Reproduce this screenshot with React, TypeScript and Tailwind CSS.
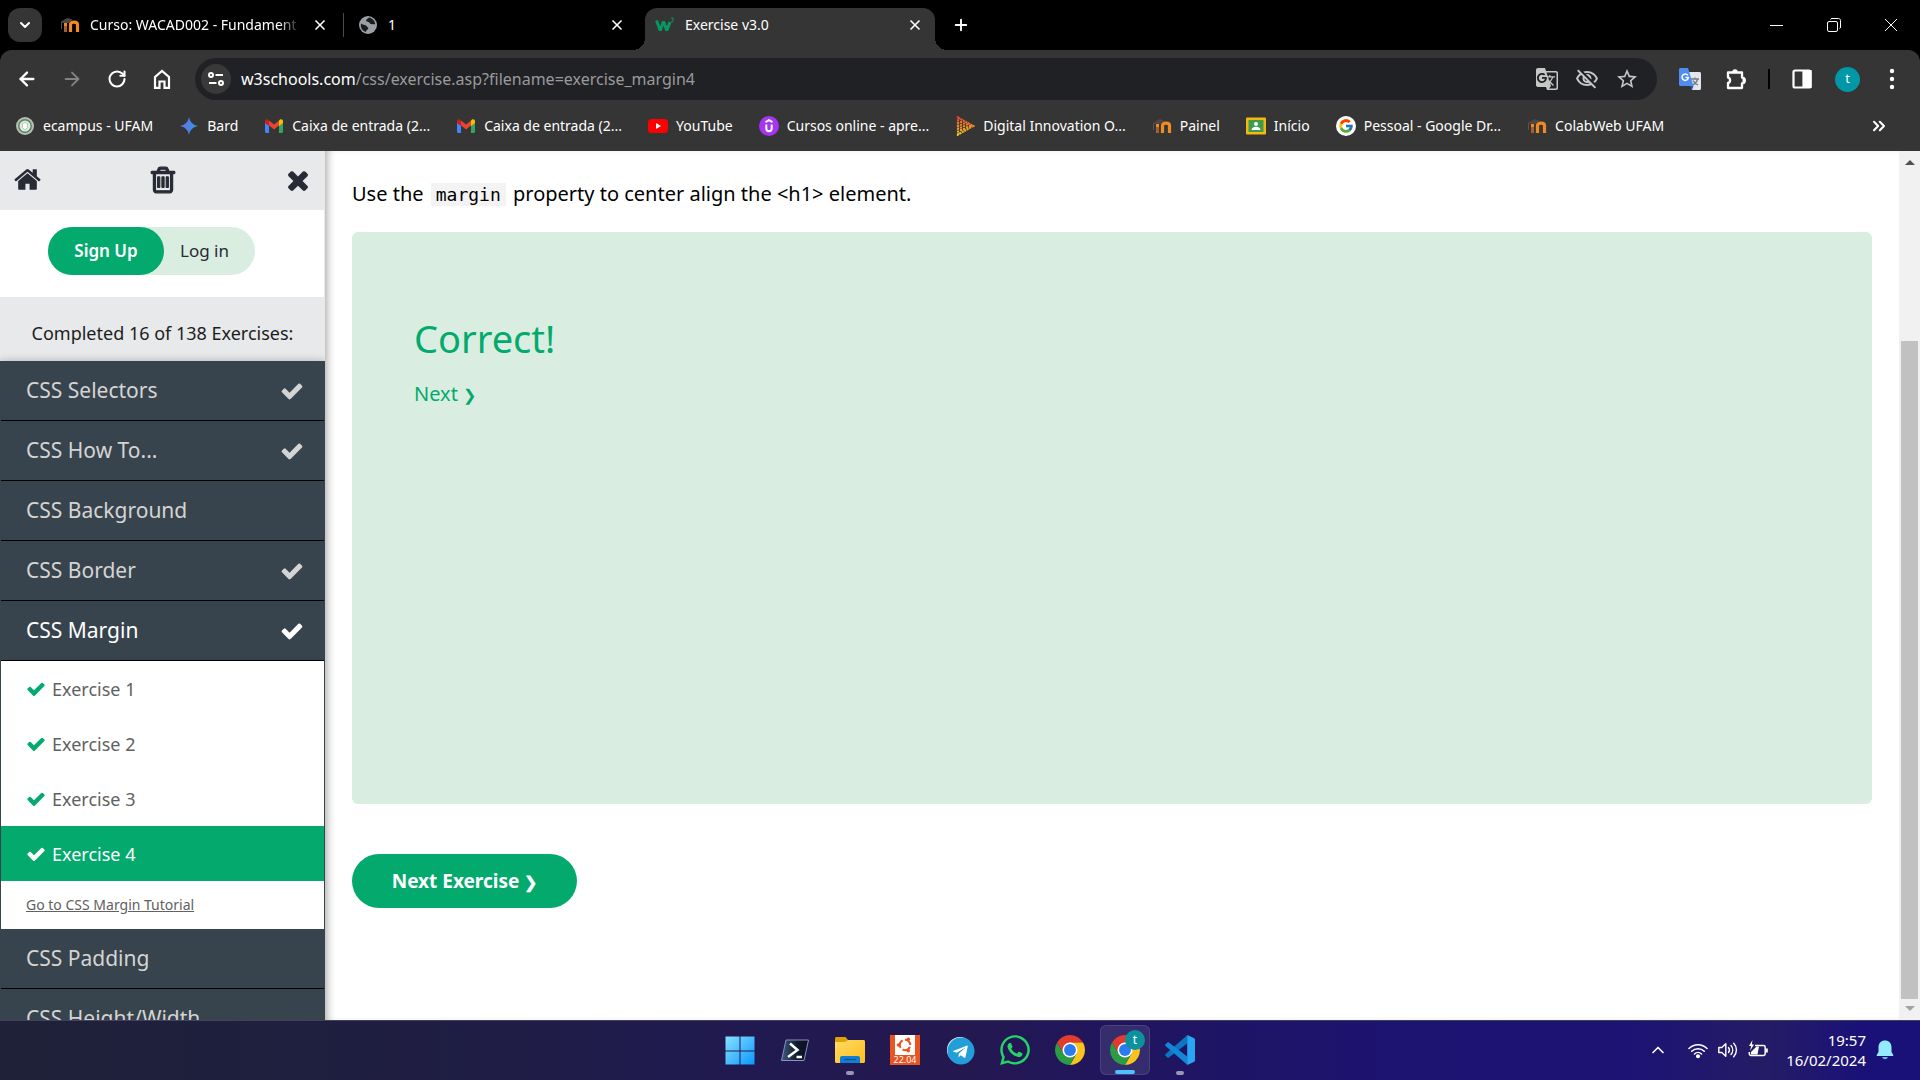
import React from "react";
import { ArrowLeft, ArrowRight, RotateCw, ChevronDown, ChevronUp, ChevronsRight, Plus, X } from "lucide-react";
import { MdGTranslate, MdOutlineVisibilityOff, MdStarBorder } from "react-icons/md";
import { FcGoogle } from "react-icons/fc";
import { FaTelegram, FaWhatsapp } from "react-icons/fa";

const PATHS = {
  check:
    "M1671 566q0 40-28 68l-724 724-136 136q-28 28-68 28t-68-28l-136-136-362-362q-28-28-28-68t28-68l136-136q28-28 68-28t68 28l294 295 656-657q28-28 68-28t68 28l136 136q28 28 28 68z",
  home:
    "M1472 992v480q0 26-19 45t-45 19h-384v-384h-256v384h-384q-26 0-45-19t-19-45v-480q0-1 .5-3t.5-3l575-474 575 474q1 2 1 6zm223-69l-62 74q-8 9-21 11h-3q-13 0-21-7l-692-577-692 577q-12 8-24 7-13-2-21-11l-62-74q-8-10-7-23.5t11-21.5l719-599q32-26 76-26t76 26l244 204v-195q0-14 9-23t23-9h192q14 0 23 9t9 23v408l219 182q10 8 11 21.5t-7 23.5z",
  times:
    "M1490 1322q0 40-28 68l-136 136q-28 28-68 28t-68-28l-294-294-294 294q-28 28-68 28t-68-28l-136-136q-28-28-28-68t28-68l294-294-294-294q-28-28-28-68t28-68l136-136q28-28 68-28t68 28l294 294 294-294q28-28 68-28t68 28l136 136q28 28 28 68t-28 68l-294 294 294 294q28 28 28 68z",
  trash:
    "M704 736v576q0 14-9 23t-23 9h-64q-14 0-23-9t-9-23v-576q0-14 9-23t23-9h64q14 0 23 9t9 23zm256 0v576q0 14-9 23t-23 9h-64q-14 0-23-9t-9-23v-576q0-14 9-23t23-9h64q14 0 23 9t9 23zm256 0v576q0 14-9 23t-23 9h-64q-14 0-23-9t-9-23v-576q0-14 9-23t23-9h64q14 0 23 9t9 23zm128 724v-948h-896v948q0 22 7 40.5t14.5 27 10.5 8.5h832q3 0 10.5-8.5t14.5-27 7-40.5zm-672-1076h448l-48-117q-7-9-17-11h-317q-10 2-17 11zm928 32v64q0 14-9 23t-23 9h-96v948q0 83-47 143.5t-113 60.5h-832q-66 0-113-58.5t-47-141.5v-952h-96q-14 0-23-9t-9-23v-64q0-14 9-23t23-9h309l70-167q15-37 54-63t79-26h320q40 0 79 26t54 63l70 167h309q14 0 23 9t9 23z",
};

function Glyph({ name, className }: { name: keyof typeof PATHS; className: string }) {
  return (
    <svg viewBox="0 0 1792 1792" className={className} fill="currentColor" aria-hidden="true">
      <path d={PATHS[name]} />
    </svg>
  );
}

function Moodle() {
  return (
    <svg viewBox="0 0 20 20" className="size-5" fill="none" aria-hidden="true">
      <path d="M5.500 17v-6" stroke="#a85f2a" strokeWidth="3" />
      <path d="M10.500 17V9.500c0-3.200 7-3.200 7 0V17" stroke="#f08a24" strokeWidth="3.200" />
      <path d="M5.500 8v3" stroke="#f08a24" strokeWidth="3" />
      <path d="M1 6.500L7.500 3l5 1.500L9 8 3 8z" fill="#4d4642" />
      <path d="M1.500 7v7" stroke="#5a5350" strokeWidth="1" />
    </svg>
  );
}

function Gmail() {
  return (
    <svg viewBox="0 0 20 20" className="size-5" aria-hidden="true">
      <path d="M1 5v10.500c0 .8.600 1.500 1.400 1.500H5V8z" fill="#4285f4" />
      <path d="M15 8v9h2.600c.8 0 1.400-.7 1.400-1.500V5z" fill="#34a853" />
      <path d="M5 4.500v5l5 4 5-4v-5l-5 4z" fill="#ea4335" />
      <path d="M1 5v2l4 3V4.500L4 3.500C2.800 2.600 1 3.500 1 5z" fill="#c5221f" />
      <path d="M19 5v2l-4 3V4.500l1-1c1.200-.9 3 0 3 1.500z" fill="#fbbc04" />
    </svg>
  );
}

function Ecampus() {
  return (
    <svg viewBox="0 0 20 20" className="size-5" aria-hidden="true">
      <circle cx="10" cy="10" r="9" fill="#b9bdb5" />
      <circle cx="10" cy="10" r="6.200" fill="#dfe8dc" stroke="#4f8462" strokeWidth="1.400" />
      <path d="M7.500 7.500l2.500-1 2.500 1v4L10 14l-2.500-2.500z" fill="#fff" stroke="#8fae93" strokeWidth=".6" />
    </svg>
  );
}

function Spark() {
  return (
    <svg viewBox="0 0 20 20" className="size-5" aria-hidden="true">
      <defs>
        <linearGradient id="spark" x1="0" y1="0" x2="1" y2="0">
          <stop offset="0" stopColor="#7b6fd0" />
          <stop offset=".45" stopColor="#4a82ea" />
          <stop offset="1" stopColor="#3f9ad0" />
        </linearGradient>
      </defs>
      <path d="M10 1c.9 5 4 8.100 9 9-5 .9-8.100 4-9 9-.9-5-4-8.100-9-9 5-.9 8.100-4 9-9z" fill="url(#spark)" />
    </svg>
  );
}

function YouTube() {
  return (
    <svg viewBox="0 0 20 20" className="size-5" aria-hidden="true">
      <rect x="0" y="3" width="20" height="14" rx="3.500" fill="#f00" />
      <path d="M8 7l5 3-5 3z" fill="#fff" />
    </svg>
  );
}

function Udemy() {
  return (
    <svg viewBox="0 0 20 20" className="size-5" aria-hidden="true">
      <circle cx="10" cy="10" r="10" fill="#a435f0" />
      <path d="M6.500 6.200L10 4.200l3.500 2M7.300 8.500v4c0 3.600 5.400 3.600 5.400 0v-4" fill="none" stroke="#fff" strokeWidth="2" />
    </svg>
  );
}

function Dio() {
  return (
    <svg viewBox="0 0 20 20" className="size-5" fill="none" aria-hidden="true">
      <defs>
        <linearGradient id="dio" x1="0" y1="0" x2="0" y2="20" gradientUnits="userSpaceOnUse">
          <stop offset="0" stopColor="#e6392d" />
          <stop offset=".5" stopColor="#f08a24" />
          <stop offset="1" stopColor="#f2d024" />
        </linearGradient>
      </defs>
      <path d="M3 1.500L18 10 3 18.500z" stroke="url(#dio)" strokeWidth="2.200" strokeDasharray="2.200 .6" />
      <path d="M6 5v10M9 6.500v7.500M12 7.500v5M15 9v2" stroke="url(#dio)" strokeWidth="2.200" strokeDasharray="2 .7" />
    </svg>
  );
}

function Classroom() {
  return (
    <svg viewBox="0 0 20 20" className="size-5" aria-hidden="true">
      <rect x="0" y="1.500" width="20" height="17" rx="1" fill="#f4b90b" />
      <rect x="2.500" y="4" width="15" height="12" fill="#3f9b4f" />
      <circle cx="10" cy="8" r="2" fill="#fff" />
      <path d="M5.500 14c0-4.500 9-4.500 9 0z" fill="#fff" />
    </svg>
  );
}

function GoogleBadge() {
  return (
    <span className="grid size-5 place-items-center rounded-full bg-white">
      <FcGoogle className="size-4" />
    </span>
  );
}

function W3() {
  return (
    <svg viewBox="0 0 20 20" className="size-5" fill="none" stroke="#059862" aria-hidden="true">
      <path d="M1.500 5.500l3.700 10 3.300-9 3.300 9 3.200-8.500" strokeWidth="3" strokeLinejoin="bevel" />
      <path d="M16 3h2.500l-1.300 1.800c2 .2 1.500 2.700-1.200 2" strokeWidth="1" />
    </svg>
  );
}

function Globe() {
  return (
    <svg viewBox="0 0 20 20" className="size-5" aria-hidden="true">
      <circle cx="10" cy="10" r="9" fill="#9aa0a6" />
      <path d="M3 8.500c2 1.800 4.500 1 5.500 2.500s2.500 1.500 1.500 3-2 1-2 3c-3-.8-6-4-5-8.500zM11 2.500c-1.500 1.700-3 1.500-2.800 3 .2 1.800 3 1 3.500 2.500s2.800 1.200 5.500 1.200c-.1-3-2.500-6-6.200-6.700z" fill="#1b1c1e" />
    </svg>
  );
}

function Translate() {
  return (
    <svg viewBox="0 0 22 24" className="h-6 w-[22px]" aria-hidden="true">
      <path d="M8 5h12.500c.8 0 1.500.7 1.500 1.500v15c0 .8-.7 1.500-1.500 1.500H13z" fill="#e3e5e8" />
      <path d="M12 12h8M16 10.500V12M18.500 12c-.6 3-3 5-5 6M14 13.500c1 2 3 3.700 5 4.500" stroke="#6f7a86" strokeWidth="1.300" fill="none" />
      <path d="M1.500 1H9l5.500 18H1.500C.7 19 0 18.300 0 17.500v-15C0 1.700.7 1 1.500 1z" fill="#4f8df5" />
      <path d="M11 19h3.500L13 23z" fill="#1d56c9" />
      <path d="M8.800 8.300A3.200 3.200 0 1 0 9.400 10.500H6.500" stroke="#fff" strokeWidth="1.500" fill="none" />
    </svg>
  );
}

function HomeOutline() {
  return (
    <svg viewBox="0 0 22 22" className="size-[22px]" fill="none" stroke="white" strokeWidth="2.200" aria-hidden="true">
      <path d="M4 19.800V9L11 3l7 6v10.800h-4.500v-6.300h-5v6.300z" />
    </svg>
  );
}

function Puzzle() {
  return (
    <svg viewBox="0 0 24 24" className="size-6" aria-hidden="true">
      <path
        d="M4 5.500h14v5.200a2.200 2.200 0 0 1 0 5.600V21H4v-5c2.800-.3 2.800-5.100 0-5.400z"
        fill="none"
        stroke="white"
        strokeWidth="2.300"
        strokeLinejoin="round"
      />
      <path d="M8.300 5a2.700 2.700 0 0 1 5.400 0zM18.500 10.800a2.700 2.700 0 0 1 0 5.400z" fill="white" />
    </svg>
  );
}

function Chrome() {
  return (
    <svg viewBox="0 0 48 48" className="size-[30px]" aria-hidden="true">
      <circle cx="24" cy="24" r="12" fill="#fff" />
      <path d="M24 12h20.780a24 24 0 0 0-41.560 0L13.600 30z" fill="#e33b2e" />
      <path d="M34.400 30L24 48a24 24 0 0 0 20.780-36H24z" fill="#fcc31e" />
      <path d="M13.600 30L3.220 12A24 24 0 0 0 24 48l10.400-18z" fill="#2a9c46" />
      <circle cx="24" cy="24" r="12" fill="#fff" />
      <circle cx="24" cy="24" r="9.500" fill="#2b7bf0" />
    </svg>
  );
}

function WindowsLogo() {
  return (
    <svg viewBox="0 0 30 30" className="size-[30px]" aria-hidden="true">
      <defs>
        <linearGradient id="win" x1="0" y1="0" x2="30" y2="30" gradientUnits="userSpaceOnUse">
          <stop offset="0" stopColor="#8be4ff" />
          <stop offset="1" stopColor="#0a96fb" />
        </linearGradient>
      </defs>
      <path d="M.5 1.500h14v14H.5zM15.500 1.500h14v14h-14zM.5 16.500h14v13H.5zM15.500 16.500h14v13h-14z" fill="url(#win)" />
    </svg>
  );
}

function PowerShell() {
  return (
    <svg viewBox="0 0 30 30" className="size-[30px]" aria-hidden="true">
      <defs>
        <linearGradient id="ps" x1="0" y1="0" x2="1" y2="0">
          <stop offset="0" stopColor="#3c5a80" />
          <stop offset=".6" stopColor="#10182b" />
          <stop offset="1" stopColor="#0b1020" />
        </linearGradient>
      </defs>
      <path d="M6 5h22.500L24 25.500H1.500z" fill="url(#ps)" stroke="#8a8fc0" strokeWidth="1" />
      <path d="M10 8.500l7.500 6.500L8 22M16.500 22H22" stroke="#fff" strokeWidth="2.500" fill="none" />
    </svg>
  );
}

function Folder() {
  return (
    <svg viewBox="0 0 30 30" className="size-[30px]" aria-hidden="true">
      <defs>
        <linearGradient id="fold" x1="0" y1="0" x2="1" y2="1">
          <stop offset="0" stopColor="#ffdb63" />
          <stop offset="1" stopColor="#fdbe1e" />
        </linearGradient>
      </defs>
      <path d="M0 8V3.500C0 2.500.7 2 1.500 2h9l3 3.500V10z" fill="#e0a106" />
      <path d="M0 7h10l3-2h15.500c.9 0 1.500.6 1.500 1.500v20c0 .9-.6 1.500-1.500 1.500h-27C.6 28 0 27.400 0 26.500z" fill="url(#fold)" />
      <path d="M5 28v-5c0-1.200.8-2 2-2h16c1.200 0 2 .8 2 2v5z" fill="#0f7fd6" />
      <path d="M9 24.500h12" stroke="#0a4f92" strokeWidth="1.200" />
    </svg>
  );
}

function Ubuntu() {
  return (
    <span className="flex size-[30px] flex-col items-center bg-[#e95420]">
      <span className="grid h-5 w-5 place-items-center bg-white">
        <svg viewBox="0 0 20 20" className="size-5" fill="none" aria-hidden="true">
          <circle cx="10" cy="10" r="5.200" stroke="#e95420" strokeWidth="2" strokeDasharray="8.500 2.400" strokeDashoffset="-2" />
          <circle cx="3.500" cy="10" r="1.800" fill="#e95420" />
          <circle cx="13.300" cy="4.300" r="1.800" fill="#e95420" />
          <circle cx="13.300" cy="15.700" r="1.800" fill="#e95420" />
        </svg>
      </span>
      <span className="text-[9px] leading-[10px] text-white">22.04</span>
    </span>
  );
}

function Code() {
  return (
    <svg viewBox="0 0 100 100" className="size-[30px]" aria-hidden="true">
      <path d="M74 1v27L13 75c-2 1.500-4 1.300-5 .2L2 69.500c-2-1.500-2-4.500 0-6z" fill="#0a76c4" />
      <path d="M74 99V72L13 25c-2-1.500-4-1.300-5-.2l-6 5.700c-2 1.500-2 4.500 0 6z" fill="#1487d4" />
      <path d="M74 0l22 10c2.500 1.200 4 3.300 4 6v68c0 2.700-1.500 4.800-4 6L74 100z" fill="#2aa5f2" />
    </svg>
  );
}

const bookmarks: { label: string; icon: React.ReactNode }[] = [
  { label: "ecampus - UFAM", icon: <Ecampus /> },
  { label: "Bard", icon: <Spark /> },
  { label: "Caixa de entrada (2...", icon: <Gmail /> },
  { label: "Caixa de entrada (2...", icon: <Gmail /> },
  { label: "YouTube", icon: <YouTube /> },
  { label: "Cursos online - apre...", icon: <Udemy /> },
  { label: "Digital Innovation O...", icon: <Dio /> },
  { label: "Painel", icon: <Moodle /> },
  { label: "Início", icon: <Classroom /> },
  { label: "Pessoal - Google Dr...", icon: <GoogleBadge /> },
  { label: "ColabWeb UFAM", icon: <Moodle /> },
];

function TabStrip() {
  return (
    <div className="flex h-[50px] items-center bg-black pl-2 text-white">
      <button aria-label="Search tabs" className="grid size-[34px] shrink-0 place-items-center rounded-xl bg-[#353535]">
        <ChevronDown className="size-4" strokeWidth={3} />
      </button>
      <div className="ml-[18px] flex w-[284px] items-center">
        <Moodle />
        <span className="ml-2.5 w-[210px] whitespace-nowrap text-sm [mask-image:linear-gradient(to_right,black_90%,transparent)]">
          Curso: WACAD002 - Fundament
        </span>
        <button aria-label="Close tab" className="ml-2.5 grid size-5 place-items-center">
          <X className="size-4" strokeWidth={2.5} />
        </button>
        <span className="ml-auto h-6 w-px bg-[#4a4a4a]" />
      </div>
      <div className="ml-3.5 flex w-[287px] items-center">
        <Globe />
        <span className="ml-2.5 flex-1 text-sm">1</span>
        <button aria-label="Close tab" className="mr-[18px] grid size-5 place-items-center">
          <X className="size-4" strokeWidth={2.5} />
        </button>
      </div>
      <div className="relative flex h-[42px] w-[290px] items-center self-end rounded-t-xl bg-[#353535] px-2.5 pb-2">
        <span className="absolute bottom-0 -left-3 size-3 bg-[radial-gradient(circle_at_0_0,black_12px,#353535_12px)]" />
        <span className="absolute bottom-0 -right-3 size-3 bg-[radial-gradient(circle_at_100%_0,black_12px,#353535_12px)]" />
        <W3 />
        <span className="ml-2.5 flex-1 text-sm">Exercise v3.0</span>
        <button aria-label="Close tab" className="grid size-5 place-items-center">
          <X className="size-4" strokeWidth={2.5} />
        </button>
      </div>
      <button aria-label="New tab" className="ml-4 grid size-5 place-items-center">
        <Plus className="size-[18px]" strokeWidth={2.5} />
      </button>
      <div className="ml-auto flex h-full items-center pr-px">
        <button aria-label="Minimize" className="grid h-full w-[57px] place-items-center">
          <span className="h-px w-[13px] bg-white" />
        </button>
        <button aria-label="Restore" className="grid h-full w-[57px] place-items-center">
          <svg viewBox="0 0 14 14" className="size-3.5" fill="none" stroke="white">
            <rect x=".5" y="3.500" width="10" height="10" rx="1.500" />
            <path d="M3.500 1.500c.2-.6.600-1 1.500-1h6.500c1.200 0 2 .8 2 2V9c0 .9-.4 1.300-1 1.500" />
          </svg>
        </button>
        <button aria-label="Close" className="grid h-full w-[57px] place-items-center">
          <svg viewBox="0 0 14 14" className="size-3.5" stroke="white">
            <path d="M1 1l12 12M13 1L1 13" />
          </svg>
        </button>
      </div>
    </div>
  );
}

function Toolbar() {
  return (
    <div className="bg-black">
      <div className="flex h-[58px] items-center rounded-t-xl bg-[#353535] px-4 text-white">
        <div className="flex w-[179px] items-center gap-[23px]">
          <button aria-label="Back"><ArrowLeft className="size-[22px]" strokeWidth={2.5} /></button>
          <button aria-label="Forward" className="text-[#838383]"><ArrowRight className="size-[22px]" /></button>
          <button aria-label="Reload" className="px-px"><RotateCw className="size-5" strokeWidth={2.5} /></button>
          <button aria-label="Home"><HomeOutline /></button>
        </div>
        <div className="flex h-[42px] flex-1 items-center rounded-full bg-[#202124] pl-1.5 pr-[18px]">
          <button aria-label="View site information" className="grid size-[30px] place-items-center rounded-full bg-[#393939]">
            <svg viewBox="0 0 18 18" className="size-[18px]" fill="none" stroke="white" strokeWidth="2">
              <circle cx="4" cy="5" r="2" />
              <path d="M8.500 5H16M2 13h7.500" />
              <circle cx="14" cy="13" r="2" />
            </svg>
          </button>
          <label className="relative ml-2.5 flex-1 text-base text-[#9a9a9a]">
            <span className="text-white">w3schools.com</span>/css/exercise.asp?filename=exercise_margin4
            <input type="text" aria-label="Address bar" className="absolute inset-0 w-full bg-transparent outline-none" />
          </label>
          <div className="flex items-center gap-4 text-[#c7c7c7]">
            <button aria-label="Translate this page"><MdGTranslate className="size-6" /></button>
            <button aria-label="Third-party cookies blocked"><MdOutlineVisibilityOff className="size-6" /></button>
            <button aria-label="Bookmark this tab"><MdStarBorder className="size-6" /></button>
          </div>
        </div>
        <div className="ml-[22px] flex items-center">
          <button aria-label="Google Translate"><Translate /></button>
          <button aria-label="Extensions" className="ml-[23px]"><Puzzle /></button>
          <span className="ml-5 h-5 w-0.5 bg-black" />
          <button aria-label="Side panel" className="ml-[22px] block">
            <svg viewBox="0 0 20 20" className="size-5" fill="none" stroke="white" strokeWidth="2.200">
              <rect x="1.500" y="1.500" width="17" height="17" rx="1.500" />
              <path d="M11.500 2h7v16h-7z" fill="white" />
            </svg>
          </button>
          <button aria-label="Profile" className="ml-[23px] grid size-[25px] place-items-center rounded-full bg-[#0097a7] text-[13px]">t</button>
          <button aria-label="Menu" className="ml-5 grid size-6 place-items-center">
            <svg viewBox="0 0 24 24" className="size-6" fill="white">
              <circle cx="12" cy="4" r="2.200" />
              <circle cx="12" cy="12" r="2.200" />
              <circle cx="12" cy="20" r="2.200" />
            </svg>
          </button>
        </div>
      </div>
      <nav aria-label="Bookmarks" className="flex h-[43px] items-start gap-[26px] bg-[#353535] pl-[15px] pr-[31px] pt-2 text-sm text-white">
        {bookmarks.map((b, i) => (
          <a key={i} href="#" className="flex shrink-0 items-center gap-2 leading-5">
            {b.icon}
            {b.label}
          </a>
        ))}
        <button aria-label="More bookmarks" className="ml-auto"><ChevronsRight className="size-5" strokeWidth={2.5} /></button>
      </nav>
    </div>
  );
}

function MenuItem({ label, done, active }: { label: string; done?: boolean; active?: boolean }) {
  return (
    <a
      href="#"
      className={
        "flex h-[60px] shrink-0 items-center justify-between border-b border-black pl-[25px] pr-5 text-[21px] " +
        (active ? "text-white" : "text-[#d4d4d4]")
      }
    >
      {label}
      {done && <Glyph name="check" className="size-6" />}
    </a>
  );
}

function Sidebar() {
  return (
    <aside className="z-10 flex w-[325px] shrink-0 flex-col overflow-hidden bg-[#e7e9eb]">
      <div className="flex h-[59px] shrink-0 items-center justify-between pb-0.5 pl-[13px] pr-3 text-[#282a35]">
        <a href="#" aria-label="Home"><Glyph name="home" className="size-[29px]" /></a>
        <button aria-label="Reset"><Glyph name="trash" className="size-[30px] stroke-current stroke-[70px]" /></button>
        <button aria-label="Close menu"><Glyph name="times" className="size-[30px]" /></button>
      </div>
      <div className="mr-px flex h-[87px] shrink-0 items-start bg-white pl-12 pt-[17px]">
        <div className="flex rounded-full bg-[#d9eee1] text-[17px]">
          <a href="#" className="grid h-12 w-[116px] place-items-center rounded-full bg-[#04aa6d] font-semibold text-white">Sign Up</a>
          <a href="#" className="grid h-12 w-[91px] place-items-center pr-2.5 text-[#282a35]">Log in</a>
        </div>
      </div>
      <div className="flex h-16 shrink-0 items-center justify-center pt-2 text-lg text-[#1d1d1d]">Completed 16 of 138 Exercises:</div>
      <nav aria-label="Exercises" className="flex flex-col border-x border-[#38444d] bg-[#38444d] shadow-[0_0_8px_rgba(0,0,0,0.25)]">
        <MenuItem label="CSS Selectors" done />
        <MenuItem label="CSS How To..." done />
        <MenuItem label="CSS Background" />
        <MenuItem label="CSS Border" done />
        <MenuItem label="CSS Margin" done active />
        <div className="bg-white text-lg text-[#616161]">
          {[1, 2, 3].map((n) => (
            <a key={n} href="#" className="flex h-[55px] items-center gap-1.5 pl-[25px]">
              <Glyph name="check" className="size-5 text-[#04aa6d]" />
              Exercise {n}
            </a>
          ))}
          <a href="#" className="flex h-[55px] items-center gap-1.5 bg-[#04aa6d] pl-[25px] text-white">
            <Glyph name="check" className="size-5" />
            Exercise 4
          </a>
          <a href="#" className="flex h-12 items-center pl-[25px] text-sm underline">Go to CSS Margin Tutorial</a>
        </div>
        <MenuItem label="CSS Padding" />
        <MenuItem label="CSS Height/Width" />
      </nav>
    </aside>
  );
}

function Main() {
  return (
    <main className="flex-1 overflow-hidden px-[27px] shadow-[inset_7px_0_8px_-5px_rgba(0,0,0,0.35)]">
      <p className="pt-[29px] text-xl leading-7 text-black">
        Use the <code className="mx-0.5 inline-block bg-[#f3f3f3] px-[5px] font-['DejaVu_Sans_Mono',monospace] text-lg leading-[23px]">margin</code> property to center align the &lt;h1&gt; element.
      </p>
      <section className="mt-6 h-[572px] rounded-md bg-[#d9eee1] px-[62px] pt-[77px] text-[#04aa6d]">
        <h2 className="text-[38px] leading-[58px]">Correct!</h2>
        <a href="#" className="mt-[13px] inline-block text-xl leading-7">
          Next <span className="text-base">❯</span>
        </a>
      </section>
      <button className="mt-[50px] h-[54px] w-[225px] rounded-full bg-[#04aa6d] text-[19px] font-bold text-white">
        Next Exercise <span className="text-base">❯</span>
      </button>
    </main>
  );
}

function Scrollbar() {
  return (
    <div className="flex w-[21px] shrink-0 flex-col items-center bg-[#f1f1f1]" aria-hidden="true">
      <span className="mt-[9px] border-x-[5px] border-b-[5px] border-x-transparent border-b-[#505050]" />
      <span className="mt-44 mb-[7px] w-[17px] flex-1 bg-[#c1c1c1]" />
      <span className="mb-[9px] border-x-[5px] border-t-[5px] border-x-transparent border-t-[#a3a3a3]" />
    </div>
  );
}

function Taskbar() {
  return (
    <footer className="flex h-[60px] shrink-0 items-center border-t border-[#44405f] bg-[linear-gradient(to_right,#1f2138_0%,#1f1e42_22%,#201a50_38%,#241850_50%,#1f1560_60%,#1d1370_72%,#1c1374_85%,#251c66_92%,#1a1178_97%,#1a1178_100%)] pb-0.5 text-white">
      <div className="flex-1 pl-[26px]" />
      <div className="flex gap-[5px]">
        <TaskIcon label="Start"><WindowsLogo /></TaskIcon>
        <TaskIcon label="PowerShell"><PowerShell /></TaskIcon>
        <TaskIcon label="File Explorer" running><Folder /></TaskIcon>
        <TaskIcon label="Ubuntu"><Ubuntu /></TaskIcon>
        <TaskIcon label="Telegram">
          <span className="grid size-[26px] place-items-center rounded-full bg-white"><FaTelegram className="size-7 text-[#229ed9]" /></span>
        </TaskIcon>
        <TaskIcon label="WhatsApp"><FaWhatsapp className="size-[34px] text-[#25d366]" /></TaskIcon>
        <TaskIcon label="Chrome"><Chrome /></TaskIcon>
        <TaskIcon label="Chrome, profile t" active>
          <Chrome />
          <span className="absolute right-1 top-1 grid size-5 place-items-center rounded-full bg-[#0b929c] text-xs leading-none">t</span>
        </TaskIcon>
        <TaskIcon label="Visual Studio Code" running><Code /></TaskIcon>
      </div>
      <div className="flex flex-1 items-center justify-end pr-[26px]">
        <button aria-label="Show hidden icons"><ChevronUp className="size-5" /></button>
        <button aria-label="Network" className="ml-5">
          <svg viewBox="0 0 20 20" className="size-5" fill="none" stroke="white" strokeWidth="1.500" strokeLinecap="round">
            <path d="M1 8.500a12.500 12.500 0 0 1 18 0M3.700 11.300a8.800 8.800 0 0 1 12.600 0M6.500 14a5 5 0 0 1 7 0" />
            <circle cx="10" cy="16.300" r="1.300" fill="white" />
          </svg>
        </button>
        <button aria-label="Volume" className="ml-2.5">
          <svg viewBox="0 0 20 20" className="size-5" fill="none" stroke="white" strokeWidth="1.400" strokeLinecap="round" strokeLinejoin="round">
            <path d="M.8 7.500h3l4-3.800v12.600l-4-3.800h-3zM10.500 7.500c1.200 1.500 1.200 3.500 0 5M13 5.500c2.300 2.600 2.300 6.400 0 9M15.700 3.300c3.600 3.800 3.600 9.600 0 13.400" />
          </svg>
        </button>
        <button aria-label="Battery" className="ml-2.5">
          <svg viewBox="0 0 20 20" className="size-5" fill="none" stroke="white" strokeWidth="1.500">
            <path d="M7 5.500h8.500c1 0 1.700.7 1.700 1.700v6.600c0 1-.7 1.700-1.700 1.700H3c-1 0-1.700-.7-1.700-1.700V12" />
            <path d="M18.800 8.500v4" strokeWidth="2" />
            <path d="M3 14.500V12l5.500-5.500H11L9.500 14.500zM4.500 0L1 6h2.200L2 11l4-6.500H3.800z" fill="white" stroke="none" />
          </svg>
        </button>
        <div className="ml-[18px] text-right text-[15px] leading-5">
          <div>19:57</div>
          <div>16/02/2024</div>
        </div>
        <button aria-label="Notifications" className="ml-2.5">
          <svg viewBox="0 0 18 20" className="h-5 w-[18px]" fill="#93ebfd">
            <path d="M9 .5c3.800 0 6.500 2.700 6.500 6.500v5l1.800 3c.2.600-.1 1-.8 1h-15c-.7 0-1-.4-.8-1l1.800-3V7C2.500 3.200 5.200.5 9 .5z" />
            <path d="M6.200 17h5.600c-.4 3-5.200 3-5.600 0z" fill="#5bb6d8" />
          </svg>
        </button>
      </div>
    </footer>
  );
}

function TaskIcon({ label, children, running, active }: { label: string; children: React.ReactNode; running?: boolean; active?: boolean }) {
  return (
    <button
      aria-label={label}
      className={"relative grid size-[50px] place-items-center rounded-md " + (active ? "border border-white/10 bg-white/10" : "")}
    >
      {children}
      {running && <span className="absolute bottom-0 left-[21px] h-1 w-2 rounded-full bg-[#9a97b4]" />}
      {active && <span className="absolute bottom-0 left-3.5 h-1 w-5 rounded-full bg-[#4cc2ff]" />}
    </button>
  );
}

export default function App() {
  return (
    <div className="flex h-screen flex-col overflow-hidden bg-white font-['Noto_Sans','Open_Sans',sans-serif]">
      <header>
        <TabStrip />
        <Toolbar />
      </header>
      <div className="flex min-h-0 flex-1">
        <Sidebar />
        <Main />
        <Scrollbar />
      </div>
      <Taskbar />
    </div>
  );
}
